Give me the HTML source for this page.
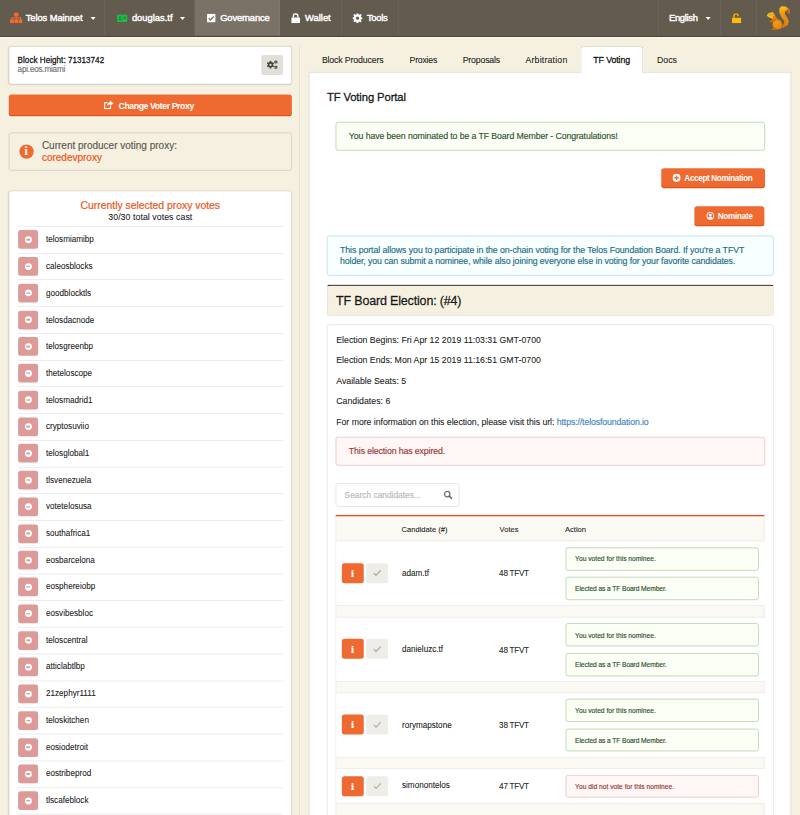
<!DOCTYPE html>
<html lang="en">
<head>
<meta charset="utf-8">
<title>TF Voting</title>
<style>
*{box-sizing:border-box;margin:0;padding:0}
html,body{width:800px;height:815px;overflow:hidden;background:#f6f0e0}
body{font-family:"Liberation Sans",sans-serif;font-size:14px;line-height:20px;color:rgba(0,0,0,.87);-webkit-text-stroke:.22px}
#root{position:absolute;left:0;top:0;width:1280px;height:1304px;transform:scale(.625);transform-origin:0 0;background:#f6f0e0;overflow:hidden}
.abs{position:absolute}
svg{display:block}
/* ---------- nav ---------- */
.nav{position:absolute;left:0;top:0;width:1280px;height:58.6px;background:#645b4f;color:#fff;font-size:15px;box-shadow:inset 0 -1.6px 0 rgba(40,30,20,.5),0 3px 0 rgba(255,255,255,.38)}
.nav .item{position:absolute;top:0;height:57px;border-right:1px solid rgba(255,255,255,.08)}
.nav .item.active{background:#7a7167}
.nav .lbl{position:absolute;top:19.4px;line-height:20px;white-space:nowrap;font-weight:400;-webkit-text-stroke:.65px #fff}
.nav .ico{position:absolute}
.caret{position:absolute;width:0;height:0;border-left:4.5px solid transparent;border-right:4.5px solid transparent;border-top:5px solid #fff;top:26.5px}
/* ---------- left column ---------- */
.seg{position:absolute;background:#fff;border:1px solid #d9d6cc;border-radius:4px;box-shadow:0 1px 2px 0 rgba(34,36,38,.15)}
.btn-or{position:absolute;background:#ee6a30;color:#fff;font-weight:700;border-radius:4.5px;text-align:center;white-space:nowrap;-webkit-text-stroke:0;box-shadow:inset 0 -2px 0 rgba(215,65,5,.55),0 0 0 1.6px rgba(255,255,255,.32)}
.vline{position:absolute;left:478.9px;top:73.6px;width:1.6px;height:1240px;background:rgba(34,36,38,.11)}
.votes .row{position:absolute;left:14px;width:424px;height:42.75px;border-top:1px solid #e4e2dc}
.votes .rm{position:absolute;left:0;top:5.4px;width:32px;height:30px;border-radius:4px;background:#dc9b99}
.votes .rm i{position:absolute;left:10.5px;top:9.5px;width:11px;height:11px;border-radius:50%;background:#fff}
.votes .rm i:after{content:"";position:absolute;left:2.2px;top:4.3px;width:6.6px;height:2.4px;background:#dc9b99}
.votes .nm{position:absolute;left:44.6px;top:10.3px;font-size:13px;line-height:20px;white-space:nowrap}
/* ---------- right column ---------- */
.tab{position:absolute;top:85px;line-height:20px;white-space:nowrap}
.msg{position:absolute;border-radius:4px;white-space:nowrap}
.msg.green{background:#fcfff5;border:1px solid #a3c293;color:#2a522b}
.msg.red{background:#fff6f6;border:1px solid #e0b4b4;color:#973533}
.msg.blue{background:#f8ffff;border:1px solid #a9d5de;color:#226a81}
.p{position:absolute;left:14px;white-space:nowrap;line-height:20px}
.th{position:absolute;top:12.6px;font-size:12.1px;line-height:16px;white-space:nowrap}
.tr{position:absolute;left:0;width:686px;background:#fff;border-top:1px solid #e6e4de;border-bottom:1px solid #e6e4de}
.tr .bi{position:absolute;left:9.2px;width:35.2px;height:32px;border-radius:4px;background:#ee6a30}
.tr .bc{position:absolute;left:48.2px;width:34.6px;height:32px;border-radius:4px;background:#efede7}
.tr .nm{position:absolute;left:105.2px;font-size:13px;line-height:20px;white-space:nowrap}
.tr .vt{position:absolute;left:260.6px;letter-spacing:-.4px;font-size:13px;line-height:20px;white-space:nowrap}
.tr .msg{left:366.6px;width:309.8px;height:36.8px;font-size:10.7px;line-height:16px;padding:9.7px 0 0 14.6px}
.tr .msg.e{letter-spacing:-.16px}
</style>
</head>
<body>
<div id="root">

<!-- NAV -->
<div class="nav">
  <div class="item" style="left:0;width:168px">
    <svg class="ico" style="left:15.5px;top:20px" width="20" height="17" viewBox="0 0 20 17"><g fill="#f26a2e"><rect x="6.4" y="0" width="7.2" height="6.2" rx=".9"/><rect x="0" y="10.8" width="6.2" height="6.2" rx=".9"/><rect x="6.900" y="10.8" width="6.2" height="6.2" rx=".9"/><rect x="13.8" y="10.8" width="6.2" height="6.2" rx=".9"/><rect x="9.2" y="5.800" width="1.6" height="5.400"/><rect x="2.3" y="7.700" width="15.4" height="1.6"/><rect x="2.3" y="7.700" width="1.6" height="3.5"/><rect x="16.1" y="7.700" width="1.6" height="3.5"/></g></svg>
    <span class="lbl" style="left:41px;letter-spacing:-.12px">Telos Mainnet</span>
    <span class="caret" style="left:145px"></span>
  </div>
  <div class="item" style="left:168px;width:144px">
    <svg class="ico" style="left:19px;top:23px" width="17" height="12" viewBox="0 0 17 12"><rect x="0" y="0" width="17" height="12" rx="1.4" fill="#21ba45"/><circle cx="5" cy="4.6" r="1.7" fill="#178c33"/><rect x="2.4" y="7" width="5.2" height="2.4" rx="1" fill="#178c33"/><rect x="9.6" y="3.6" width="5" height="1.2" fill="#178c33"/><rect x="9.6" y="6.2" width="5" height="1.2" fill="#178c33"/></svg>
    <span class="lbl" style="left:43px">douglas.tf</span>
    <span class="caret" style="left:120px"></span>
  </div>
  <div class="item active" style="left:312px;width:136px">
    <svg class="ico" style="left:19px;top:22px" width="14" height="14" viewBox="0 0 14 14"><rect x="0" y="0" width="14" height="14" rx="2" fill="#fff"/><path d="M3 7.2l2.8 2.8 5.2-5.6" stroke="#7a7167" stroke-width="2" fill="none"/></svg>
    <span class="lbl" style="left:40.4px;letter-spacing:-.3px">Governance</span>
  </div>
  <div class="item" style="left:448px;width:99px">
    <svg class="ico" style="left:18px;top:21px" width="14" height="16" viewBox="0 0 14 16"><path d="M3.4 7V4.6a3.6 3.6 0 017.2 0V7" stroke="#fff" stroke-width="2.2" fill="none"/><rect x="0" y="7" width="14" height="9" rx="1.4" fill="#fff"/></svg>
    <span class="lbl" style="left:40px">Wallet</span>
  </div>
  <div class="item" style="left:547px;width:91px">
    <svg class="ico" style="left:17px;top:21px" width="16" height="16" viewBox="0 0 16 16"><g fill="#fff"><circle cx="8" cy="8" r="5.800"/><rect x="6.4" y="0" width="3.2" height="16" rx=".5"/><rect x="6.4" y="0" width="3.2" height="16" rx=".5" transform="rotate(45 8 8)"/><rect x="6.4" y="0" width="3.2" height="16" rx=".5" transform="rotate(90 8 8)"/><rect x="6.4" y="0" width="3.2" height="16" rx=".5" transform="rotate(135 8 8)"/></g><circle cx="8" cy="8" r="2.500" fill="#645a4d"/></svg>
    <span class="lbl" style="left:40px;letter-spacing:-.4px">Tools</span>
  </div>
  <div class="item" style="left:1053px;width:100px;border-left:1px solid rgba(255,255,255,.08)">
    <span class="lbl" style="left:16.4px;letter-spacing:-.5px">English</span>
    <span class="caret" style="left:75px"></span>
  </div>
  <div class="item" style="left:1153px;width:58px">
    <svg class="ico" style="left:18px;top:21px" width="15" height="16" viewBox="0 0 15 16"><path d="M3.4 7.4V4.4a3.3 3.3 0 016.6 0V5" stroke="#fbbd08" stroke-width="2.1" fill="none"/><rect x="0" y="7.4" width="15" height="8.6" rx="1.4" fill="#fbbd08"/></svg>
  </div>
  <svg class="ico" style="left:1200px;top:0" width="80" height="64" viewBox="0 0 800 640">
    <defs><linearGradient id="tg" x1="0" y1="0" x2="0" y2="1"><stop offset="0" stop-color="#fbc70c"/><stop offset=".3" stop-color="#ee9a16"/><stop offset="1" stop-color="#d2700e"/></linearGradient>
    <linearGradient id="bg" x1="0" y1="0" x2="1" y2="1"><stop offset="0" stop-color="#f2a416"/><stop offset="1" stop-color="#dd8510"/></linearGradient></defs>
    <path d="M468 138l32-38 70 5 40 32 30 33-5 50-35-20-15-30-25 10v50l40 60 20 50-20 60-60 40-40 10 10-30 30-40 5-50-45-60-32-72z" fill="url(#tg)"/>
    <path d="M590 138l50 32-5 50-35-20-15-30z" fill="#c4620f"/>
    <path d="M560 180v50l40 60 20 50-20 60-30 20 8-70-40-80z" fill="#e58c14" opacity=".8"/>
    <path d="M370 318l60-20 62 32 24 60-16 60-60 20-60-20-20-50 4-50z" fill="#e08810"/>
    <ellipse cx="442" cy="388" rx="60" ry="62" fill="url(#bg)"/>
    <path d="M268 245l32-36 45-10 14-16 22 32 20 36 10 50-40 20-30-30-52-20z" fill="#f5bf1c"/>
    <path d="M345 200l14-16 22 32 20 36 10 50-30 14z" fill="#eaa51a"/>
    <path d="M372 250l50 30 30 32-50 18-36-10z" fill="#d87a10"/>
    <circle cx="322" cy="238" r="9" fill="#a8700a"/>
    <path d="M298 347l62-32 42 6-12 24-60 12z" fill="#d5700e"/>
    <path d="M338 466l52-26 52 30-42 10-52-2z" fill="#cc660a"/>
  </svg>
</div>

<!-- LEFT COLUMN -->
<div class="seg" style="left:14px;top:74px;width:453px;height:61px">
  <div class="abs" style="left:13.2px;top:12.8px;font-size:13px;line-height:18px;font-weight:400;-webkit-text-stroke:.5px;white-space:nowrap;letter-spacing:.02px" id="bh">Block Height: 71313742</div>
  <div class="abs" style="left:13.2px;top:27.3px;font-size:13px;line-height:18px;color:#6f6f78;white-space:nowrap;letter-spacing:-.33px">api.eos.miami</div>
  <div class="abs" style="left:403px;top:13px;width:35.4px;height:31.6px;border-radius:4px;background:#e1dfd8">
    <svg class="abs" style="left:0;top:0" width="35" height="32" viewBox="0 0 35 32"><g fill="#45433f"><circle cx="14.8" cy="15.6" r="4.3"/><rect x="13.50" y="9.70" width="2.6" height="11.8" rx=".3" transform="rotate(0 14.8 15.6)"/><rect x="13.50" y="9.70" width="2.6" height="11.8" rx=".3" transform="rotate(60 14.8 15.6)"/><rect x="13.50" y="9.70" width="2.6" height="11.8" rx=".3" transform="rotate(120 14.8 15.6)"/><circle cx="23.4" cy="11.3" r="1.9"/><rect x="22.75" y="8.50" width="1.3" height="5.6" rx=".3" transform="rotate(0 23.4 11.3)"/><rect x="22.75" y="8.50" width="1.3" height="5.6" rx=".3" transform="rotate(60 23.4 11.3)"/><rect x="22.75" y="8.50" width="1.3" height="5.6" rx=".3" transform="rotate(120 23.4 11.3)"/><circle cx="23.4" cy="19.6" r="1.9"/><rect x="22.75" y="16.80" width="1.3" height="5.6" rx=".3" transform="rotate(0 23.4 19.6)"/><rect x="22.75" y="16.80" width="1.3" height="5.6" rx=".3" transform="rotate(60 23.4 19.6)"/><rect x="22.75" y="16.80" width="1.3" height="5.6" rx=".3" transform="rotate(120 23.4 19.6)"/></g><circle cx="14.8" cy="15.6" r="1.800" fill="#e1dfd8"/><circle cx="23.4" cy="11.3" r=".8" fill="#e1dfd8"/><circle cx="23.4" cy="19.600" r=".8" fill="#e1dfd8"/></svg>
  </div>
</div>

<div class="btn-or" style="left:14px;top:150.7px;width:453px;height:35.6px">
  <svg class="abs" style="left:152px;top:10.5px" width="16" height="14" viewBox="0 0 16 14"><path d="M10.800 9.200V11.200a1.600 1.600 0 01-1.600 1.600H2.800A1.600 1.600 0 011.200 11.200V4.800A1.600 1.600 0 012.800 3.200h2.400" stroke="#fff" stroke-width="2.100" fill="none" stroke-linecap="round"/><path d="M10 0l5.800 4.300L10 8.600V6C7.400 6 6 6.900 5.200 9 5.200 5.200 7 2.900 10 2.600z" fill="#fff"/></svg>
  <span class="abs" style="left:175.6px;top:8px;line-height:20px;letter-spacing:-.68px" id="cvp">Change Voter Proxy</span>
</div>

<div class="abs" style="left:14px;top:212px;width:453px;height:61px;border:1px solid #c5c2b8;border-radius:4px;background:#f6f0e0;box-shadow:0 0 0 0 transparent">
  <div class="abs" style="left:16px;top:18px;width:23px;height:23px;border-radius:50%;background:#ee6a30"></div>
  <span class="abs" style="left:24.4px;top:18.8px;font-family:'Liberation Serif',serif;font-weight:700;font-size:18.5px;line-height:20px;color:#fbf6ea;-webkit-text-stroke:.3px #fbf6ea">i</span>
  <div class="abs" style="left:52px;top:11.3px;font-size:16px;line-height:20px;color:#5a5752;white-space:nowrap" id="cpv">Current producer voting proxy:</div>
  <div class="abs" style="left:52px;top:29.7px;font-size:16px;line-height:20px;color:#ea5a1e;-webkit-text-stroke:.35px;white-space:nowrap">coredevproxy</div>
</div>

<div class="seg votes" style="left:14px;top:304.6px;width:453px;height:1020px;border-bottom-left-radius:0;border-bottom-right-radius:0">
  <div class="abs" style="left:0;top:13.8px;width:451px;text-align:center;font-size:16.6px;line-height:20px;color:#ea5a1e;-webkit-text-stroke:.35px;white-space:nowrap"><span id="csp">Currently selected proxy votes</span></div>
  <div class="abs" style="left:0;top:31.3px;width:451px;text-align:center;font-size:14px;line-height:20px;white-space:nowrap;letter-spacing:.1px"><span id="tvc">30/30 total votes cast</span></div>
  <div class="row" style="top:56.4px"><div class="rm"><i></i></div><div class="nm">telosmiamibp</div></div>
  <div class="row" style="top:99.15px"><div class="rm"><i></i></div><div class="nm">caleosblocks</div></div>
  <div class="row" style="top:141.9px"><div class="rm"><i></i></div><div class="nm">goodblocktls</div></div>
  <div class="row" style="top:184.65px"><div class="rm"><i></i></div><div class="nm">telosdacnode</div></div>
  <div class="row" style="top:227.4px"><div class="rm"><i></i></div><div class="nm">telosgreenbp</div></div>
  <div class="row" style="top:270.15px"><div class="rm"><i></i></div><div class="nm">theteloscope</div></div>
  <div class="row" style="top:312.9px"><div class="rm"><i></i></div><div class="nm">telosmadrid1</div></div>
  <div class="row" style="top:355.65px"><div class="rm"><i></i></div><div class="nm">cryptosuviio</div></div>
  <div class="row" style="top:398.4px"><div class="rm"><i></i></div><div class="nm">telosglobal1</div></div>
  <div class="row" style="top:441.15px"><div class="rm"><i></i></div><div class="nm">tlsvenezuela</div></div>
  <div class="row" style="top:483.9px"><div class="rm"><i></i></div><div class="nm">votetelosusa</div></div>
  <div class="row" style="top:526.65px"><div class="rm"><i></i></div><div class="nm">southafrica1</div></div>
  <div class="row" style="top:569.4px"><div class="rm"><i></i></div><div class="nm">eosbarcelona</div></div>
  <div class="row" style="top:612.15px"><div class="rm"><i></i></div><div class="nm">eosphereiobp</div></div>
  <div class="row" style="top:654.9px"><div class="rm"><i></i></div><div class="nm">eosvibesbloc</div></div>
  <div class="row" style="top:697.65px"><div class="rm"><i></i></div><div class="nm">teloscentral</div></div>
  <div class="row" style="top:740.4px"><div class="rm"><i></i></div><div class="nm">atticlabtlbp</div></div>
  <div class="row" style="top:783.15px"><div class="rm"><i></i></div><div class="nm">21zephyr1111</div></div>
  <div class="row" style="top:825.9px"><div class="rm"><i></i></div><div class="nm">teloskitchen</div></div>
  <div class="row" style="top:868.65px"><div class="rm"><i></i></div><div class="nm">eosiodetroit</div></div>
  <div class="row" style="top:911.4px"><div class="rm"><i></i></div><div class="nm">eostribeprod</div></div>
  <div class="row" style="top:954.15px"><div class="rm"><i></i></div><div class="nm">tlscafeblock</div></div>
  <div class="row" style="top:996.9px"><div class="rm"><i></i></div><div class="nm">telosunlimit</div></div>
</div>

<div class="vline"></div>

<!-- RIGHT COLUMN -->
<div class="abs" style="left:494px;top:115px;width:772px;height:1200px;background:#fff;border:1px solid #cfccc5"></div>
<div class="abs" style="left:928.6px;top:73.6px;width:100.4px;height:43.4px;background:#fff;border:1px solid #cfccc5;border-bottom:none;border-radius:4px 4px 0 0"></div>
<span class="tab" style="left:515px;letter-spacing:-.23px" id="tb1">Block Producers</span>
<span class="tab" style="left:655.4px;letter-spacing:-.4px">Proxies</span>
<span class="tab" style="left:740.3px;letter-spacing:-.28px">Proposals</span>
<span class="tab" style="left:840.8px;letter-spacing:.3px">Arbitration</span>
<span class="tab" style="left:949.4px;font-weight:400;-webkit-text-stroke:.55px;letter-spacing:-.15px" id="tb5">TF Voting</span>
<span class="tab" style="left:1051.2px">Docs</span>

<div class="abs" style="left:523px;top:144.3px;font-size:18px;line-height:24px;font-weight:400;-webkit-text-stroke:.55px;white-space:nowrap;letter-spacing:-.17px" id="tvp">TF Voting Portal</div>

<div class="msg green" style="left:537px;top:194.6px;width:687px;height:46px;padding:12.4px 0 0 20.2px" ><span id="nom" style="letter-spacing:-.16px">You have been nominated to be a TF Board Member - Congratulations!</span></div>

<div class="btn-or" style="left:1057.6px;top:268.8px;width:166px;height:32px;font-size:13px">
  <svg class="abs" style="left:18px;top:9.5px" width="13" height="13" viewBox="0 0 13 13"><circle cx="6.5" cy="6.5" r="6.5" fill="#fff"/><rect x="2.9" y="5.4" width="7.2" height="2.2" fill="#ee6a30"/><rect x="5.4" y="2.9" width="2.2" height="7.2" fill="#ee6a30"/></svg>
  <span class="abs" style="left:37.4px;top:7.4px;line-height:20px;letter-spacing:-.56px" id="acc">Accept Nomination</span>
</div>
<div class="btn-or" style="left:1111.4px;top:329.6px;width:112px;height:32px;font-size:13px">
  <svg class="abs" style="left:18.4px;top:9.5px" width="13" height="13" viewBox="0 0 13 13"><circle cx="6.500" cy="6.500" r="5.700" fill="none" stroke="#fff" stroke-width="1.6"/><circle cx="6.500" cy="5.200" r="2.100" fill="#fff"/><path d="M2.600 10.400c.8-2 2.200-2.600 3.900-2.600s3.100.6 3.900 2.600c-1 1.200-2.400 1.800-3.900 1.800s-2.900-.6-3.900-1.800z" fill="#fff"/></svg>
  <span class="abs" style="left:37px;top:7.4px;line-height:20px;letter-spacing:-.4px" id="nmn">Nominate</span>
</div>

<div class="msg blue" style="left:523px;top:377px;width:715px;height:64px;padding:12.8px 0 0 20px;line-height:18.3px;white-space:normal">
  <span id="inf1" style="white-space:nowrap;letter-spacing:-.105px">This portal allows you to participate in the on-chain voting for the Telos Foundation Board. If you're a TFVT</span><br><span id="inf2" style="white-space:nowrap;letter-spacing:-.135px">holder, you can submit a nominee, while also joining everyone else in voting for your favorite candidates.</span>
</div>

<div class="abs" style="left:523px;top:455.4px;width:715px;height:49.2px;background:#f6f0e0;border:1px solid #d9d5c8;border-top:2.6px solid #1b1c1d;border-radius:4px">
  <div class="abs" style="left:13.6px;top:10.4px;font-size:20px;line-height:26px;font-weight:400;-webkit-text-stroke:.5px;white-space:nowrap;letter-spacing:-.27px" id="tbe">TF Board Election: (#4)</div>
</div>

<div class="seg" style="left:523px;top:519.4px;width:715px;height:820px;box-shadow:none;border-color:#dcdad3">
  <div class="p" style="top:13.4px" id="eb">Election Begins: Fri Apr 12 2019 11:03:31 GMT-0700</div>
  <div class="p" style="top:46.1px">Election Ends: Mon Apr 15 2019 11:16:51 GMT-0700</div>
  <div class="p" style="top:78.8px">Available Seats: 5</div>
  <div class="p" style="top:111.5px">Candidates: 6</div>
  <div class="p" style="top:144.2px"><span id="fmi" style="letter-spacing:-.07px">For more information on this election, please visit this url: </span><span style="color:#4183c4;letter-spacing:-.19px">https://telosfoundation.io</span></div>
  <div class="msg red" style="left:13px;top:178.6px;width:687px;height:46px;padding:12.4px 0 0 20.2px;letter-spacing:-.19px">This election has expired.</div>

  <div class="abs" style="left:13px;top:253px;width:198.4px;height:37.4px;border:1px solid #d9d8d4;border-radius:4px;background:#fff">
    <span class="abs" style="left:13.4px;top:8.9px;font-size:13.4px;line-height:20px;color:#b8b8b8;white-space:nowrap" id="sc">Search candidates...</span>
    <svg class="abs" style="left:172px;top:11px" width="14" height="14" viewBox="0 0 14 14"><circle cx="5.600" cy="5.600" r="4.300" fill="none" stroke="#6b6b6b" stroke-width="1.900"/><path d="M8.800 8.800l4 4" stroke="#6b6b6b" stroke-width="2.300" stroke-linecap="round"/></svg>
  </div>

  <!-- table -->
  <div class="abs" style="left:13px;top:303.6px;width:686px;height:520px;background:#fbf9f3;border-top:2.6px solid #e9461b;border-left:1px solid #e6e4de;border-right:1px solid #e6e4de">
    <span class="th" style="left:104.6px" id="th1">Candidate (#)</span>
    <span class="th" style="left:261.4px">Votes</span>
    <span class="th" style="left:366px">Action</span>

    <div class="tr" style="top:39.4px;height:104px">
      <div class="bi" style="top:34.2px"><span class="abs" style="left:14.6px;top:6.2px;font-family:'Liberation Serif',serif;font-weight:700;font-size:17.5px;line-height:20px;color:#fff;-webkit-text-stroke:.25px #fff">i</span></div>
      <div class="bc" style="top:34.2px"><svg class="abs" style="left:10.8px;top:10.6px" width="13.4" height="11" viewBox="0 0 13.4 11"><path d="M1 5.800l3.700 3.600L12.400 1.400" stroke="#b3b1aa" stroke-width="2.200" fill="none"/></svg></div>
      <div class="nm" style="top:41px">adam.tf</div>
      <div class="vt" style="top:42px">48 TFVT</div>
      <div class="msg green" style="top:9.4px">You voted for this nominee.</div>
      <div class="msg green e" style="top:56.8px">Elected as a TF Board Member.</div>
    </div>
    <div class="tr" style="top:161px;height:104px">
      <div class="bi" style="top:34.2px"><span class="abs" style="left:14.6px;top:6.2px;font-family:'Liberation Serif',serif;font-weight:700;font-size:17.5px;line-height:20px;color:#fff;-webkit-text-stroke:.25px #fff">i</span></div>
      <div class="bc" style="top:34.2px"><svg class="abs" style="left:10.8px;top:10.6px" width="13.4" height="11" viewBox="0 0 13.4 11"><path d="M1 5.800l3.700 3.600L12.400 1.400" stroke="#b3b1aa" stroke-width="2.200" fill="none"/></svg></div>
      <div class="nm" style="top:41px">danieluzc.tf</div>
      <div class="vt" style="top:42px">48 TFVT</div>
      <div class="msg green" style="top:9.4px">You voted for this nominee.</div>
      <div class="msg green e" style="top:56.8px">Elected as a TF Board Member.</div>
    </div>
    <div class="tr" style="top:281.9px;height:104px">
      <div class="bi" style="top:34.2px"><span class="abs" style="left:14.6px;top:6.2px;font-family:'Liberation Serif',serif;font-weight:700;font-size:17.5px;line-height:20px;color:#fff;-webkit-text-stroke:.25px #fff">i</span></div>
      <div class="bc" style="top:34.2px"><svg class="abs" style="left:10.8px;top:10.6px" width="13.4" height="11" viewBox="0 0 13.4 11"><path d="M1 5.800l3.700 3.600L12.400 1.400" stroke="#b3b1aa" stroke-width="2.200" fill="none"/></svg></div>
      <div class="nm" style="top:41px">rorymapstone</div>
      <div class="vt" style="top:42px">38 TFVT</div>
      <div class="msg green" style="top:9.4px">You voted for this nominee.</div>
      <div class="msg green e" style="top:56.8px">Elected as a TF Board Member.</div>
    </div>
    <div class="tr" style="top:403.2px;height:57px">
      <div class="bi" style="top:11.6px"><span class="abs" style="left:14.6px;top:6.2px;font-family:'Liberation Serif',serif;font-weight:700;font-size:17.5px;line-height:20px;color:#fff;-webkit-text-stroke:.25px #fff">i</span></div>
      <div class="bc" style="top:11.6px"><svg class="abs" style="left:10.8px;top:10.6px" width="13.4" height="11" viewBox="0 0 13.4 11"><path d="M1 5.800l3.700 3.600L12.400 1.400" stroke="#b3b1aa" stroke-width="2.200" fill="none"/></svg></div>
      <div class="nm" style="top:17px">simonontelos</div>
      <div class="vt" style="top:18px">47 TFVT</div>
      <div class="msg red" style="top:9.4px">You did not vote for this nominee.</div>
    </div>
  </div>
</div>

</div>
</body>
</html>
